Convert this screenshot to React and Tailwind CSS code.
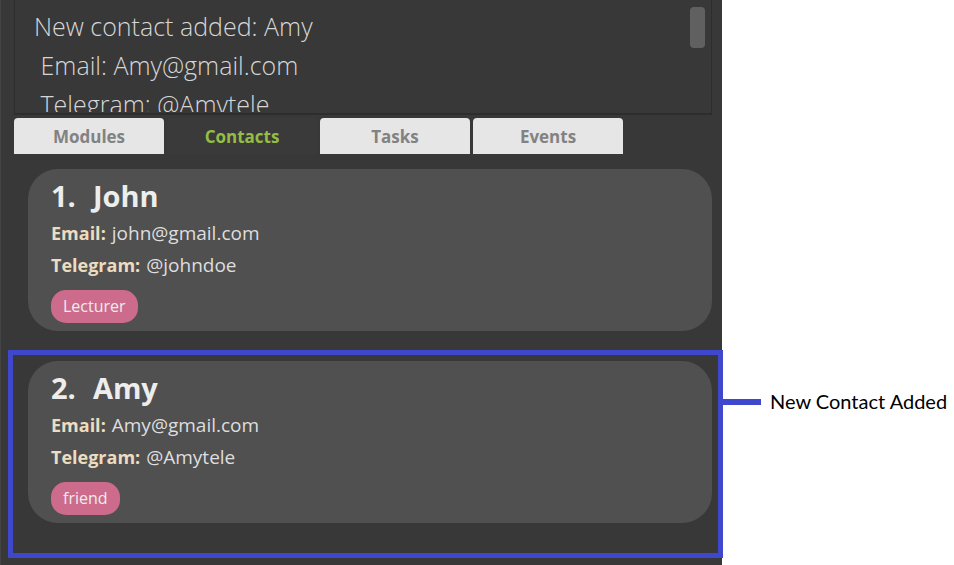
const tabs = ["Modules", "Contacts", "Tasks", "Events"];

const contacts = [
  { id: 1, name: "John", email: "john@gmail.com", telegram: "@johndoe", tag: "Lecturer" },
  { id: 2, name: "Amy", email: "Amy@gmail.com", telegram: "@Amytele", tag: "friend", isNew: true },
];

const log = "New contact added: Amy\n Email: Amy@gmail.com\n Telegram: @Amytele";

function ResultDisplay() {
  return (
    <div className="mr-[10px] ml-[14px] flex h-[115px] border-x border-b-2 border-[#2d2d2d] pr-[6px] pb-px">
      <textarea
        readOnly
        aria-label="Command result"
        value={log}
        className="h-full min-w-0 flex-1 resize-none overflow-hidden bg-transparent pt-[7px] pl-[19px] text-[25px] leading-[39px] font-light text-[#d6d6d6] outline-none"
      />
      <div className="mt-[7px] h-[41px] w-[15px] rounded-[4px] bg-[#606060]" />
    </div>
  );
}

function Tabs() {
  return (
    <div role="tablist" className="mt-[3px] ml-[14px] flex gap-[3px]">
      {tabs.map((tab) => (
        <button
          key={tab}
          type="button"
          role="tab"
          aria-selected={tab === "Contacts"}
          className={
            "h-9 w-[150px] rounded-t-[4px] pt-[2px] text-[17px] font-bold " +
            (tab === "Contacts" ? "bg-[#3a3a3a] text-[#94bd46]" : "bg-[#e6e6e6] text-[#828282]")
          }
        >
          {tab}
        </button>
      ))}
    </div>
  );
}

function Detail({ label, value }) {
  return (
    <div className="flex h-8 items-baseline gap-[6px] leading-8">
      <dt className="text-[18px] font-bold text-[#ecdcc0]">{label}:</dt>
      <dd className="text-[19px] text-[#dedede]">{value}</dd>
    </div>
  );
}

function NewContactMarker() {
  return (
    <div className="pointer-events-none absolute -top-[11px] -right-[11px] -bottom-[35px] -left-[20px] border-[5px] border-[#3f48cc]">
      <div className="absolute top-[31px] left-full ml-[5px] flex h-8 items-center gap-[9px]">
        <span className="h-[6px] w-[38px] bg-[#3f48cc]" />
        <span className="pb-[3px] font-['Lato',sans-serif] text-[20px] whitespace-nowrap text-black">
          New Contact Added
        </span>
      </div>
    </div>
  );
}

function ContactCard({ contact }) {
  return (
    <li className="relative">
      <article className="rounded-[30px] bg-[#505050] px-[23px] pt-[7px] pb-2">
        <h2 className="flex gap-[17px] text-[29px] leading-[39px] font-bold text-[#ededed]">
          <span>{contact.id}.</span>
          <span>{contact.name}</span>
        </h2>
        <dl className="mt-[2px]">
          <Detail label="Email" value={contact.email} />
          <Detail label="Telegram" value={contact.telegram} />
        </dl>
        <div className="mt-[9px] flex">
          <span className="rounded-[15px] bg-[#cc6b8b] px-3 text-[16px] leading-[33px] text-[#ededed]">
            {contact.tag}
          </span>
        </div>
      </article>
      {contact.isNew && <NewContactMarker />}
    </li>
  );
}

export default function App() {
  return (
    <div className="flex min-h-screen bg-white font-['Open_Sans',sans-serif]">
      <main className="min-w-0 flex-1 border-l border-[#444444] bg-[#383838]">
        <div className="-ml-px">
          <ResultDisplay />
          <Tabs />
          <ul className="mt-[15px] mr-[10px] ml-7 flex flex-col gap-[30px]">
            {contacts.map((contact) => (
              <ContactCard key={contact.id} contact={contact} />
            ))}
          </ul>
        </div>
      </main>
      <div className="w-[232px] shrink-0" />
    </div>
  );
}
